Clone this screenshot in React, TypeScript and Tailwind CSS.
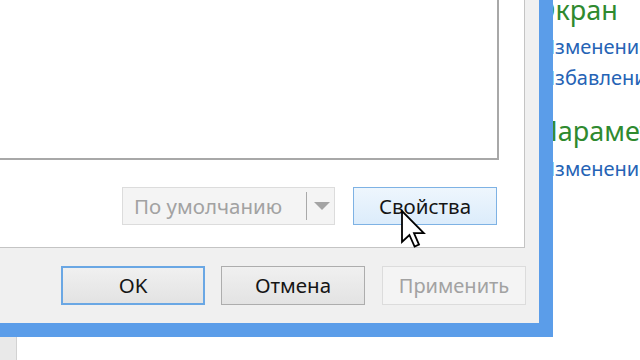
import React from 'react';

const ui = { fontFamily: '"Noto Sans", "Open Sans", sans-serif' };

function Cursor() {
  return (
    <svg width="25" height="38" viewBox="0 0 12.5 19" className="absolute left-[401px] top-[210px]">
      <path
        d="M0.5 0.5 L0.5 16 L4.2 12.5 L6.8 18.3 L9 17.3 L6.5 11.6 L11.4 11.6 Z"
        fill="#ffffff"
        stroke="#000000"
        strokeWidth="0.9"
        strokeLinejoin="miter"
      />
    </svg>
  );
}

export default function App() {
  return (
    <div className="relative w-[640px] h-[360px] overflow-hidden bg-white" style={ui}>
      {/* control panel behind the dialog */}
      <div className="flex h-full">
        <div className="shrink-0 w-[17px] h-full bg-[#e9e9e9] border-r border-[#d2d2d2]" />
        <div className="shrink-0 ml-[520px] flex flex-col whitespace-nowrap">
          <div className="text-[27px] leading-[26px] text-[#2f8a2f] mt-[-3px] ml-[1px]">Экран</div>
          <div className="text-[20px] leading-[31px] text-[#2563b5] mt-[8px] ml-[3px]">Изменение разрешения</div>
          <div className="text-[20px] leading-[31px] text-[#2563b5] ml-[3px]">Избавление от мерцания</div>
          <div className="text-[27px] leading-[30px] text-[#2f8a2f] mt-[23px] ml-[1px]">Параметры</div>
          <div className="text-[20px] leading-[31px] text-[#2563b5] mt-[7px] ml-[3px]">Изменение параметров</div>
        </div>
      </div>

      {/* properties dialog */}
      <div className="absolute left-0 top-0 w-[553px] h-[337px] border-r-[14px] border-b-[14px] border-[#5b9de9] bg-[#f0f0f0] flex flex-col">
        <div className="w-[525px] h-[248px] bg-white border-r border-b border-[#c4c4c4] flex flex-col">
          <div className="w-[499px] h-[160px] bg-white border-r-2 border-b-2 border-[#a8a8a8]" />
          <div className="flex items-start mt-[27px] pl-[122px] gap-[18px]">
            <div className="w-[213px] h-[38px] bg-[#f4f4f4] border border-[#dcdcdc] flex items-center text-[20.5px] text-[#a2a2a2]">
              <span className="pl-[11px] w-[183px]">По умолчанию</span>
              <div className="w-px h-[28px] bg-[#a9a9a9]" />
              <svg width="16" height="9" viewBox="0 0 16 9" className="ml-[7px]">
                <path d="M0 0 L16 0 L8 8 Z" fill="#a4a4a4" />
              </svg>
            </div>
            <div className="w-[144px] h-[38px] bg-gradient-to-b from-[#eef6fd] to-[#dcecfb] border border-[#7eb2e4] flex items-center justify-center text-[20.5px] text-[#151515]">
              Свойства
            </div>
          </div>
        </div>

        <div className="flex mt-[18px] pl-[61px]">
          <div className="w-[144px] h-[39px] bg-gradient-to-b from-[#f0f0f0] to-[#e3e3e3] border-2 border-[#6aa7e4] flex items-center justify-center text-[20.5px] text-[#151515]">
            OK
          </div>
          <div className="ml-[16px] w-[144px] h-[39px] bg-gradient-to-b from-[#f0f0f0] to-[#e3e3e3] border border-[#adadad] flex items-center justify-center text-[20.5px] text-[#151515]">
            Отмена
          </div>
          <div className="ml-[17px] w-[144px] h-[39px] bg-[#f4f4f4] border border-[#dcdcdc] flex items-center justify-center text-[20px] text-[#a2a2a2]">
            Применить
          </div>
        </div>
      </div>

      <Cursor />
    </div>
  );
}
